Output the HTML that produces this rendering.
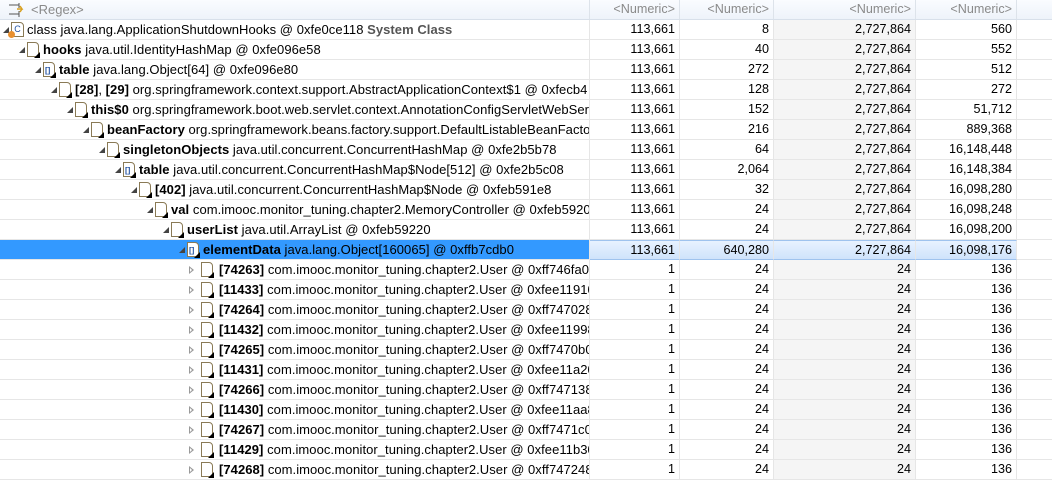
<!DOCTYPE html>
<html><head><meta charset="utf-8">
<style>
*{margin:0;padding:0;box-sizing:border-box}
body{width:1052px;height:467px;overflow:hidden;background:#fff;font-family:"Liberation Sans","Noto Sans CJK SC",sans-serif;font-size:12.6px;color:#000}
.row{position:absolute;left:0;width:1052px;height:20px;border-bottom:1px solid #e6e6e6}
.c{position:absolute;top:0;height:19px;line-height:19px;overflow:hidden;white-space:nowrap;border-right:1px solid #e6e6e6}
.n{text-align:right;padding-right:4px}
.c0{left:0;width:590px}
.c1{left:590px;width:90px}
.c2{left:680px;width:94px}
.c3{left:774px;width:142px;background:#f5f5f5}
.c4{left:916px;width:101px}
.hdr{top:0;height:20px;background:linear-gradient(#fafcff,#eef3fa);border-bottom:1px solid #d8e0ea}
.hdr .c{color:#8a8a8a;border-right:1px solid #dde3ea;background:transparent}
.sel .c0{background:#3399ff}
.sel .c1,.sel .c2,.sel .c3,.sel .c4{background:linear-gradient(#e8f2ff,#cfe3fb);border-top:1px solid #9fc3ee;border-bottom:1px solid #9fc3ee;height:20px;line-height:18px}
.arr{position:absolute;top:6px;width:0;height:0}
.open{border-left:6px solid transparent;border-bottom:6px solid #444;top:7px}
.closed{border-top:4px solid transparent;border-bottom:4px solid transparent;border-left:5px solid #999;top:6px}
.closed:after{content:"";position:absolute;left:-4px;top:-2px;border-top:2px solid transparent;border-bottom:2px solid transparent;border-left:2.5px solid #fff}
.ic{position:absolute;top:2px;width:12px;height:15px;border:1px solid #8a7a55;background:#fff;border-radius:0 4px 0 0}
.ic:after{content:"";position:absolute;right:-2px;bottom:-2px;border-left:6px solid transparent;border-bottom:6px solid #000}
.ic.a:before{content:"[]";position:absolute;left:1px;top:-2px;font-size:8px;color:#2050a0;font-weight:bold}
.t{position:absolute;top:0;font-size:13px;letter-spacing:0.05px}
b{font-weight:bold}
</style></head><body>
<div class="row hdr">
 <div class="c c0"><svg style="position:absolute;left:8px;top:3px" width="18" height="14"><path d="M1 2h10M11 0v5M1 11h10M11 8v6" stroke="#555" fill="none"/><path d="M9 6h5l-2-3M14 6l-2 3" stroke="#d8a020" stroke-width="1.5" fill="none"/></svg><span style="position:absolute;left:31px;font-size:13px">&lt;Regex&gt;</span></div>
 <div class="c c1 n">&lt;Numeric&gt;</div><div class="c c2 n">&lt;Numeric&gt;</div><div class="c c3 n">&lt;Numeric&gt;</div><div class="c c4 n">&lt;Numeric&gt;</div>
</div>
<div id="rows"></div>
<script>
var R=[
[0,'o','c','class java.lang.ApplicationShutdownHooks @ 0xfe0ce118 <b style="color:#555">System Class</b>','113,661','8','2,727,864','560'],
[1,'o','f','<b>hooks</b> java.util.IdentityHashMap @ 0xfe096e58','113,661','40','2,727,864','552'],
[2,'o','a','<b>table</b> java.lang.Object[64] @ 0xfe096e80','113,661','272','2,727,864','512'],
[3,'o','f','<b>[28]</b>, <b>[29]</b> org.springframework.context.support.AbstractApplicationContext$1 @ 0xfecb4','113,661','128','2,727,864','272'],
[4,'o','f','<b>this$0</b> org.springframework.boot.web.servlet.context.AnnotationConfigServletWebServer','113,661','152','2,727,864','51,712'],
[5,'o','f','<b>beanFactory</b> org.springframework.beans.factory.support.DefaultListableBeanFactory','113,661','216','2,727,864','889,368'],
[6,'o','f','<b>singletonObjects</b> java.util.concurrent.ConcurrentHashMap @ 0xfe2b5b78','113,661','64','2,727,864','16,148,448'],
[7,'o','a','<b>table</b> java.util.concurrent.ConcurrentHashMap$Node[512] @ 0xfe2b5c08','113,661','2,064','2,727,864','16,148,384'],
[8,'o','f','<b>[402]</b> java.util.concurrent.ConcurrentHashMap$Node @ 0xfeb591e8','113,661','32','2,727,864','16,098,280'],
[9,'o','f','<b>val</b> com.imooc.monitor_tuning.chapter2.MemoryController @ 0xfeb59208','113,661','24','2,727,864','16,098,248'],
[10,'o','f','<b>userList</b> java.util.ArrayList @ 0xfeb59220','113,661','24','2,727,864','16,098,200'],
[11,'o','a','<b>elementData</b> java.lang.Object[160065] @ 0xffb7cdb0','113,661','640,280','2,727,864','16,098,176']];
var U=[['74263','0xff746fa0'],['11433','0xfee11910'],['74264','0xff747028'],['11432','0xfee11998'],['74265','0xff7470b0'],['11431','0xfee11a20'],['74266','0xff747138'],['11430','0xfee11aa8'],['74267','0xff7471c0'],['11429','0xfee11b30'],['74268','0xff747248']];
U.forEach(function(u){R.push([12,'c','f','<b>['+u[0]+']</b> com.imooc.monitor_tuning.chapter2.User @ '+u[1],'1','24','24','136'])});
var h='';
R.forEach(function(r,i){
 var L=r[0],x=L*16,y=20+i*20;
 var sel=i==11;
 var arr='<span class="arr open" style="left:'+(x+3)+'px"></span>';
 var icl=x+11;
 var tx=x+27;
 if(L==12){icl=201;tx=219;arr='<span class="arr closed" style="left:189px"></span>';}
 var ic;
 if(r[2]=='c') ic='<span style="position:absolute;left:'+(icl)+'px;top:2px;width:13px;height:15px;border:1px solid #8a7a55;border-radius:0 4px 0 0;background:#fff;font-size:9px;line-height:12px;text-align:center;color:#2050a0">C</span><span style="position:absolute;left:'+(icl-3)+'px;top:11px;width:7px;height:7px;border-radius:50%;background:#e89030"></span>';
 else ic='<span class="ic'+(r[2]=='a'?' a':'')+'" style="left:'+icl+'px"></span>';
 h+='<div class="row'+(sel?' sel':'')+'" style="top:'+y+'px"><div class="c c0">'+arr+ic+'<span class="t" style="left:'+tx+'px">'+r[3]+'</span></div><div class="c c1 n">'+r[4]+'</div><div class="c c2 n">'+r[5]+'</div><div class="c c3 n">'+r[6]+'</div><div class="c c4 n">'+r[7]+'</div></div>';
});
document.getElementById('rows').innerHTML=h;
</script>
</body></html>
